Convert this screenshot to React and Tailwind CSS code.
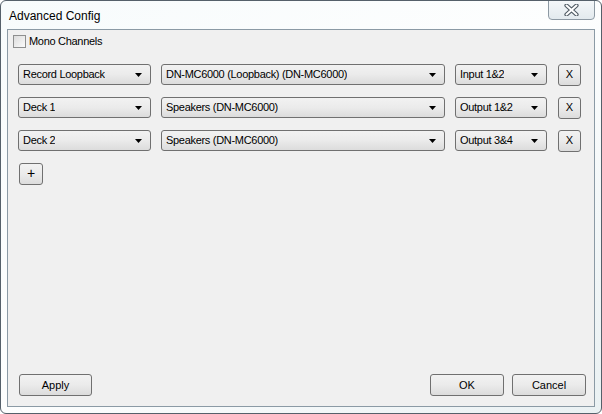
import { useState } from "react";

const font = { fontFamily: '"Liberation Sans", Arial, sans-serif' };

function Arrow() {
  return (
    <svg width="7" height="4" viewBox="0 0 7 4" className="shrink-0">
      <path d="M0 0 H7 L3.5 4 Z" fill="#000" />
    </svg>
  );
}

function Combo({ value, width }) {
  return (
    <div
      className={`${width} h-[21px] flex items-center justify-between pl-[4px] pr-[8px] rounded-[3px] border border-[#707070] bg-gradient-to-b from-[#f2f2f2] via-[#ebebeb] to-[#dcdcdc] text-[11px] tracking-[-0.3px] text-black shrink-0`}
    >
      <span className="truncate">{value}</span>
      <Arrow />
    </div>
  );
}

function Button({ children, className = "" }) {
  return (
    <div
      className={`h-[22px] flex items-center justify-center rounded-[3px] border border-[#707070] bg-gradient-to-b from-[#f2f2f2] via-[#ebebeb] to-[#dcdcdc] text-[11px] text-black shrink-0 ${className}`}
    >
      {children}
    </div>
  );
}

const rows = [
  { name: "Record Loopback", device: "DN-MC6000 (Loopback) (DN-MC6000)", channel: "Input 1&2" },
  { name: "Deck 1", device: "Speakers (DN-MC6000)", channel: "Output 1&2" },
  { name: "Deck 2", device: "Speakers (DN-MC6000)", channel: "Output 3&4" },
];

export default function App() {
  const [mono, setMono] = useState(false);

  return (
    <div style={font} className="w-[602px] h-[414px] bg-white">
      <div className="w-full h-full flex flex-col rounded-[6px] border border-[#55606a] bg-gradient-to-br from-[#f7fbfc] via-[#fdfefe] to-[#eaf1f3] overflow-hidden">
        {/* title bar */}
        <div className="h-[28px] flex items-start justify-between shrink-0">
          <div className="pl-[8px] pt-[6px] text-[12px] text-black">Advanced Config</div>
          <div className="mr-[6px] -mt-px w-[47px] h-[20px] flex items-center justify-center rounded-b-[4px] border border-[#8d99a3] bg-gradient-to-b from-[#f4f7f9] to-[#e3eaee]">
            <svg width="15" height="12" viewBox="0 0 15 12">
              <path d="M2.5 1.5 L12.5 10.5 M12.5 1.5 L2.5 10.5" stroke="#4f5a63" strokeWidth="4.2" strokeLinecap="round" />
              <path d="M2.5 1.5 L12.5 10.5 M12.5 1.5 L2.5 10.5" stroke="#ffffff" strokeWidth="2" strokeLinecap="round" />
            </svg>
          </div>
        </div>

        {/* client area */}
        <div className="flex-1 mx-[6px] mb-[6px] border border-[#8b9aa5] bg-[#f0f0f0] flex flex-col">
          <label className="mt-[3px] ml-[5px] flex items-center gap-[3px] text-[11px] tracking-[-0.3px] text-black w-fit">
            <span
              onClick={() => setMono(!mono)}
              className="w-[13px] h-[13px] border border-[#8e8f8f] bg-gradient-to-br from-[#dcdcdc] to-[#fbfbfb] flex items-center justify-center"
            >
              {mono && <span className="text-[10px] leading-none">✓</span>}
            </span>
            Mono Channels
          </label>

          <div className="mt-[14px] ml-[10px] flex flex-col gap-[11px]">
            {rows.map((r) => (
              <div key={r.name} className="flex items-center gap-[10px]">
                <Combo value={r.name} width="w-[133px]" />
                <Combo value={r.device} width="w-[284px]" />
                <Combo value={r.channel} width="w-[92px]" />
                <Button className="w-[23px] ml-px">X</Button>
              </div>
            ))}
            <Button className="w-[24px] ml-px text-[14px]">+</Button>
          </div>

          <div className="flex-1" />

          <div className="flex items-center pl-[11px] pr-[8px] pb-[10px]">
            <Button className="w-[73px]">Apply</Button>
            <div className="flex-1" />
            <div className="flex gap-[8px]">
              <Button className="w-[74px]">OK</Button>
              <Button className="w-[74px]">Cancel</Button>
            </div>
          </div>
        </div>
      </div>
    </div>
  );
}
